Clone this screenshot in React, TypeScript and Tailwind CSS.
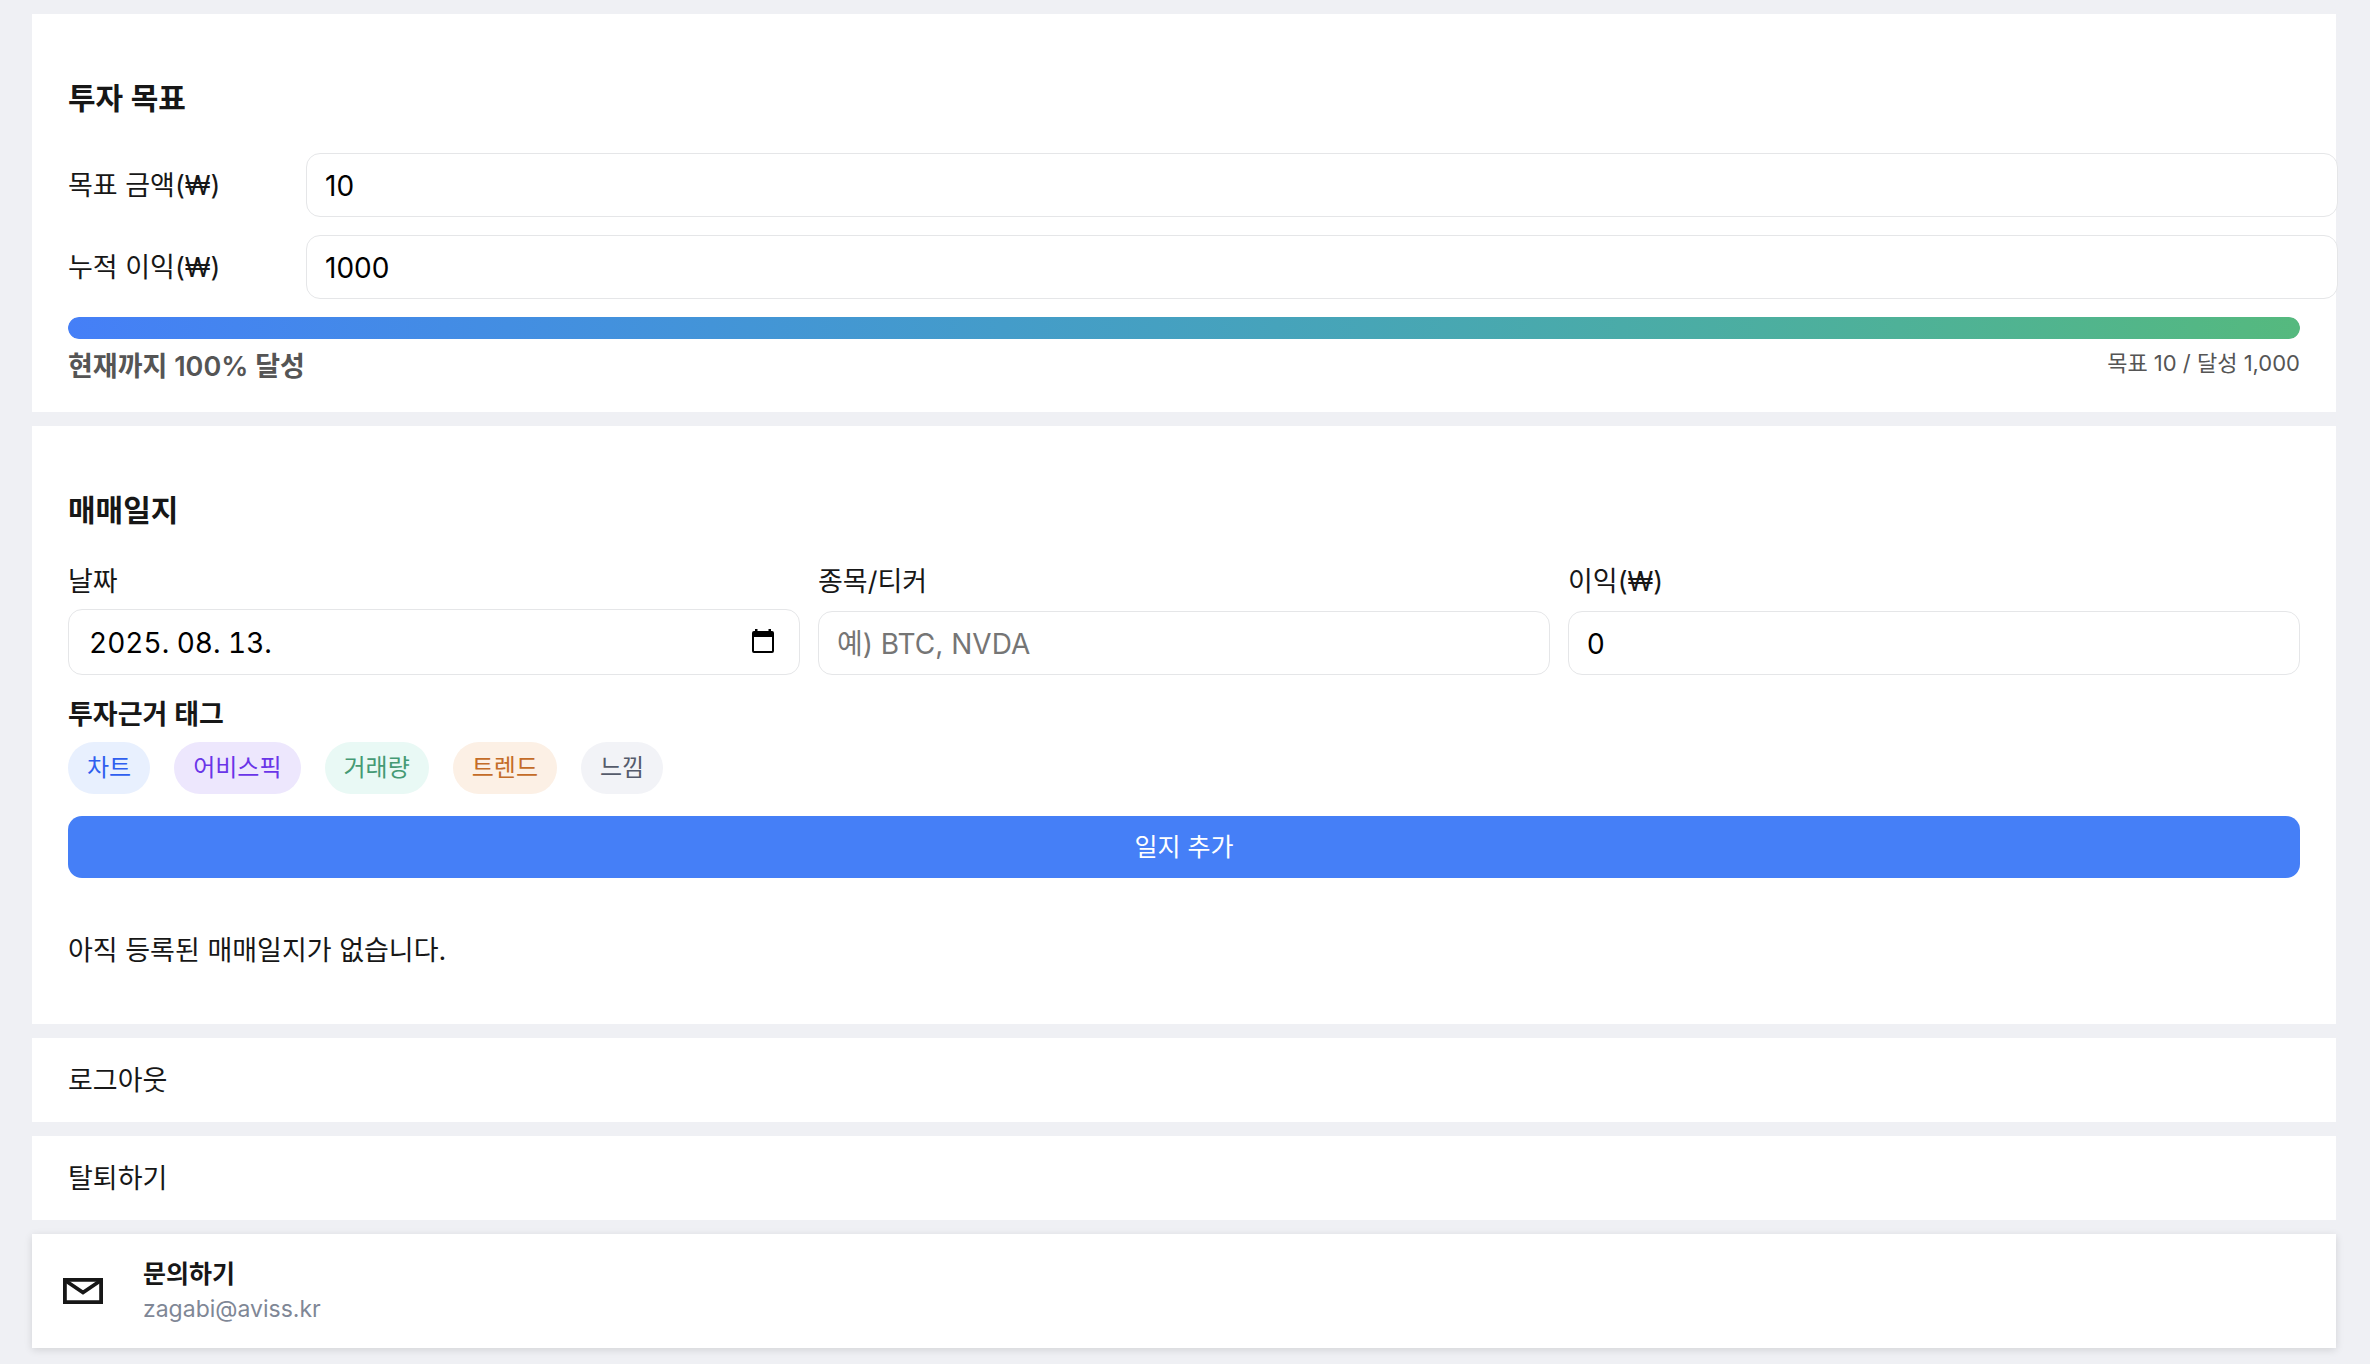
import React, { useState } from 'react';

const TAGS = [
  { name: '차트', style: 'bg-[#e8f0fe] text-[#2f5fef]' },
  { name: '어비스픽', style: 'bg-[#ede7fd] text-[#6a35e8]' },
  { name: '거래량', style: 'bg-[#e9f9f5] text-[#459a74]' },
  { name: '트렌드', style: 'bg-[#fcf0e5] text-[#c46c28]' },
  { name: '느낌', style: 'bg-[#f2f3f7] text-[#555b6b]' },
];

const fieldBox = 'rounded-[14px] border border-[#e5e6e8] bg-white pt-0.5';

const CalendarIcon: React.FC = () => (
  <svg width="22" height="24" viewBox="0 0 22 24" aria-hidden="true">
    <path
      fill="#000"
      fillRule="evenodd"
      d="M3 0h2.5v2h11V0H19v2h1a2 2 0 0 1 2 2v18a2 2 0 0 1-2 2H2a2 2 0 0 1-2-2V4a2 2 0 0 1 2-2h1zM2 8v14h18V8z"
    />
  </svg>
);

const MailIcon: React.FC = () => (
  <svg width="40" height="26" viewBox="0 0 40 26" fill="none" stroke="#171717" aria-hidden="true">
    <path d="M1.9 1.9h36.2v22.2H1.9z" strokeWidth="3.8" />
    <path d="M3 3l17 11.5L37 3" strokeWidth="3.8" />
  </svg>
);

const App: React.FC = () => {
  const [goal, setGoal] = useState('10');
  const [profit, setProfit] = useState('1000');
  const [date, setDate] = useState('2025. 08. 13.');
  const [ticker, setTicker] = useState('');
  const [amount, setAmount] = useState('0');

  const goalNum = Number(goal) || 0;
  const profitNum = Number(profit) || 0;
  const percent = goalNum > 0 ? Math.min(100, Math.round((profitNum / goalNum) * 100)) : 0;

  return (
    <main className="flex min-h-screen flex-col gap-3.5 bg-[#eff0f4] pt-3.5 pr-[34px] pb-4 pl-8 font-['Inter','Noto_Sans_CJK_KR',sans-serif] text-[27px] leading-[38px] text-[#171717]">
      {/* Goal */}
      <section className="bg-white px-9 pt-16 pb-[26px]">
        <h2 className="mb-[35px] text-[30px] leading-10 font-semibold">투자 목표</h2>
        {/* inputs run slightly past the card edge */}
        <div className="-mr-[38px] flex flex-col gap-[18px]">
          <div className="flex items-center gap-[18px]">
            <label htmlFor="goal" className="w-[220px] shrink-0 pt-0.5">목표 금액(₩)</label>
            <input
              id="goal"
              className={`h-16 min-w-0 flex-1 px-[18px] text-[28px] text-black ${fieldBox}`}
              value={goal}
              onChange={(e) => setGoal(e.target.value)}
            />
          </div>
          <div className="flex items-center gap-[18px]">
            <label htmlFor="profit" className="w-[220px] shrink-0 pt-0.5">누적 이익(₩)</label>
            <input
              id="profit"
              className={`h-16 min-w-0 flex-1 px-[18px] text-[28px] text-black ${fieldBox}`}
              value={profit}
              onChange={(e) => setProfit(e.target.value)}
            />
          </div>
        </div>
        <div className="mt-[18px] h-[22px] overflow-hidden rounded-full bg-[#eff0f4]">
          <div
            className="h-full rounded-full bg-linear-to-r from-[#457ff7] to-[#55b97e]"
            style={{ width: `${percent}%` }}
          />
        </div>
        <div className="mt-[9px] flex items-start justify-between text-[#555555]">
          <span className="font-semibold">현재까지 {percent}% 달성</span>
          <span className="text-[22px] leading-[30px]">
            목표 {goalNum.toLocaleString()} / 달성 {profitNum.toLocaleString()}
          </span>
        </div>
      </section>

      {/* Journal */}
      <section className="bg-white px-9 pt-16 pb-[54px]">
        <h2 className="mb-[33px] text-[30px] leading-10 font-semibold">매매일지</h2>
        <div className="grid grid-cols-3 gap-[18px]">
          <div className="flex flex-col justify-between gap-2">
            <label htmlFor="date">날짜</label>
            <div className={`flex h-[66px] items-center pr-[25px] pl-5 ${fieldBox}`}>
              <input
                id="date"
                className="min-w-0 flex-1 text-[28px] text-black tabular-nums outline-none"
                value={date}
                onChange={(e) => setDate(e.target.value)}
              />
              <button type="button" aria-label="달력" className="pb-1">
                <CalendarIcon />
              </button>
            </div>
          </div>
          <div className="flex flex-col justify-between gap-2">
            <label htmlFor="ticker">종목/티커</label>
            <input
              id="ticker"
              className={`h-16 w-full px-[18px] text-[28px] text-black placeholder:text-[#757575] ${fieldBox}`}
              placeholder="예) BTC, NVDA"
              value={ticker}
              onChange={(e) => setTicker(e.target.value)}
            />
          </div>
          <div className="flex flex-col justify-between gap-2">
            <label htmlFor="amount">이익(₩)</label>
            <input
              id="amount"
              className={`h-16 w-full px-[18px] text-[28px] text-black ${fieldBox}`}
              value={amount}
              onChange={(e) => setAmount(e.target.value)}
            />
          </div>
        </div>
        <h3 className="mt-[21px] font-semibold">투자근거 태그</h3>
        <div className="mt-2 flex gap-6">
          {TAGS.map((tag) => (
            <button key={tag.name} type="button" className={`h-[52px] rounded-full px-[19px] text-[24px] ${tag.style}`}>
              {tag.name}
            </button>
          ))}
        </div>
        <button type="button" className="mt-[22px] h-[62px] w-full rounded-[14px] bg-[#457ff7] text-[25px] text-white">
          일지 추가
        </button>
        <p className="mt-[54px]">아직 등록된 매매일지가 없습니다.</p>
      </section>

      <button type="button" className="bg-white px-9 pt-6 pb-[22px] text-left">로그아웃</button>
      <button type="button" className="bg-white px-9 pt-6 pb-[22px] text-left">탈퇴하기</button>

      {/* Contact */}
      <a
        href="mailto:zagabi@aviss.kr"
        className="flex items-center gap-10 bg-white py-[22px] pl-[31px] shadow-[0_2px_8px_rgba(0,0,0,0.12)]"
      >
        <MailIcon />
        <div>
          <div className="text-[25px] leading-9 font-semibold">문의하기</div>
          <div className="text-[23px] leading-[34px] text-[#7f8796]">zagabi@aviss.kr</div>
        </div>
      </a>
    </main>
  );
};

export default App;
